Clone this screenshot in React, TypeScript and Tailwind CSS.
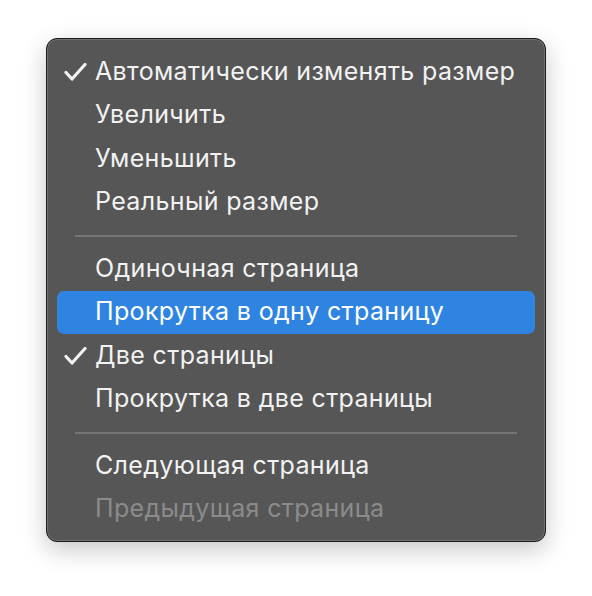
import React from 'react';

type Item = { label: string; checked?: boolean; highlighted?: boolean; disabled?: boolean };

const groups: Item[][] = [
    [
        { label: 'Автоматически изменять размер', checked: true },
        { label: 'Увеличить' },
        { label: 'Уменьшить' },
        { label: 'Реальный размер' },
    ],
    [
        { label: 'Одиночная страница' },
        { label: 'Прокрутка в одну страницу', highlighted: true },
        { label: 'Две страницы', checked: true },
        { label: 'Прокрутка в две страницы' },
    ],
    [
        { label: 'Следующая страница' },
        { label: 'Предыдущая страница', disabled: true },
    ],
];

const Check = () => (
    <svg width="23" height="18" viewBox="0 0 23 18" fill="none">
        <path d="M2 9.5 L8 16 L21 1.5" stroke="currentColor" strokeWidth="3.2" strokeLinecap="round" strokeLinejoin="round" />
    </svg>
);

const MenuRow: React.FC<{ item: Item }> = ({ item }) => (
    <div
        className={`mx-[10px] h-[43.5px] rounded-[7px] flex items-center ${
            item.highlighted ? 'bg-[#2f84e2] text-white' : item.disabled ? 'text-[#8b8b8b]' : 'text-[#f2f2f2]'
        }`}
    >
        <div className="w-[38px] flex justify-end pr-[8px] pt-[1px]">{item.checked && <Check />}</div>
        <span className="text-[25px] leading-none tracking-[0.35px] pb-[1px]">{item.label}</span>
    </div>
);

export default function App() {
    return (
        <div className="w-[592px] h-[596px] bg-white pt-[38px] pl-[46px]" style={{ fontFamily: 'Inter, "Noto Sans", sans-serif' }}>
            <div className="w-[500px] h-[504px] rounded-[11px] bg-[#565656] border border-[#1c1c1c] shadow-[0_8px_24px_rgba(0,0,0,0.22),inset_0_0_0_1px_rgba(255,255,255,0.16)] pt-[11px] pb-[10px]">
                {groups.map((group, gi) => (
                    <React.Fragment key={gi}>
                        {gi > 0 && (
                            <div className="h-[23px] flex items-center px-[28px]">
                                <div className="w-full h-[2px] bg-[#757575]" />
                            </div>
                        )}
                        {group.map((item) => (
                            <MenuRow key={item.label} item={item} />
                        ))}
                    </React.Fragment>
                ))}
            </div>
        </div>
    );
}
